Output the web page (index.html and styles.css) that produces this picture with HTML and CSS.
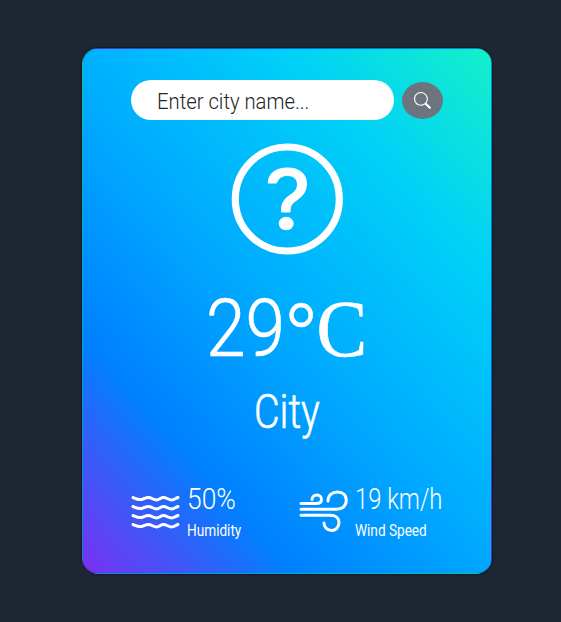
FILE: index.html
```html
<!DOCTYPE html>
<html lang="en">
<head>
<meta charset="utf-8">
<title>Weather</title>
<link rel="stylesheet" href="styles.css">
</head>
<body>
<main class="card">
  <form class="search">
    <label class="field"><span class="fit placeholder">Enter city name...</span></label>
    <button class="go" type="button" aria-label="Search">
      <svg width="17" height="17" viewBox="0 0 16 16" fill="#fff"><path d="M11.742 10.344a6.500 6.500 0 1 0-1.397 1.398l3.850 3.850a1 1 0 0 0 1.415-1.414l-3.850-3.850zM12 6.500a5.500 5.500 0 1 1-11 0 5.500 5.500 0 0 1 11 0"/></svg>
    </button>
  </form>
  <svg class="status" viewBox="0 0 112 112" fill="none" stroke="#fff">
    <circle cx="56.300" cy="56" r="52" stroke-width="7.200"/>
    <path d="M38 40.500H45C47 40.500 46.500 33 56.500 33C62.500 33 66 36 66 41C66 46 64 48 60 51C53 56 50 59.500 50 67.500C50 69 50.500 69.500 51.500 69.500H58C59.200 69.500 59.700 69 59.700 67.500C59.700 62 61.500 60.500 66.500 57C72.500 52.500 76 48 76 40.500C76 30.500 68 24.500 56.500 24.500C45 24.500 37.300 30 36.800 39C36.800 40 37 40.500 38 40.500Z" fill="#fff" stroke="none"/>
    <ellipse cx="55.200" cy="80.500" rx="7.500" ry="6.800" fill="#fff" stroke="none"/>
  </svg>
  <h1 class="temp"><span class="fit digits">29</span><span class="fit unit">°C</span></h1>
  <h2 class="city"><span class="fit">City</span></h2>
  <section class="details">
    <div class="detail">
      <svg class="icon" viewBox="0 0 50 46" fill="none" stroke="#fff" stroke-width="3" stroke-linecap="round">
        <path d="M2 7.500C5.500 9 7.500 10 10.500 9.500C13.500 9 14.500 7.500 17.500 7.500S22.500 10 25.500 10S29.500 7.500 32.500 7.500S37.500 10 40.500 10S44 8.500 47 7.500"/>
        <path d="M2 16.500C5.500 18 7.500 19 10.500 18.500C13.500 18 14.500 16.500 17.500 16.500S22.500 19 25.500 19S29.500 16.500 32.500 16.500S37.500 19 40.500 19S44 17.500 47 16.500"/>
        <path d="M2 25.500C5.500 27 7.500 28 10.500 27.500C13.500 27 14.500 25.500 17.500 25.500S22.500 28 25.500 28S29.500 25.500 32.500 25.500S37.500 28 40.500 28S44 26.500 47 25.500"/>
        <path d="M2 34.500C5.500 36 7.500 37 10.500 36.500C13.500 36 14.500 34.500 17.500 34.500S22.500 37 25.500 37S29.500 34.500 32.500 34.500S37.500 37 40.500 37S44 35.500 47 34.500"/>
      </svg>
      <div class="reading">
        <p class="value"><span class="fit percent">50%</span></p>
        <p class="label"><span class="fit humidity">Humidity</span></p>
      </div>
    </div>
    <div class="detail">
      <svg class="icon" viewBox="0 0 50 46" fill="none" stroke="#fff" stroke-width="3" stroke-linecap="round">
        <path d="M2 13.500H17C20.500 13.500 22.500 12 22.500 9.500C22.500 7 20.500 5 18 5C15 5 13 7 13 9.500"/>
        <path d="M2 19.300H37.500C43.500 19.300 47.300 15.500 47.300 10.500C47.300 5 43.500 2 38.500 2C33 2 29 5.500 29 11"/>
        <path d="M2 25.200H31.500C36.500 25.200 40 28 40 32.500C40 37.500 36.500 40.500 32.500 40.500C28 40.500 25 37 25 33"/>
      </svg>
      <div class="reading">
        <p class="value"><span class="fit speed">19 km/h</span></p>
        <p class="label"><span class="fit windlabel">Wind Speed</span></p>
      </div>
    </div>
  </section>
</main>
</body>
</html>
```
FILE: styles.css
```css
* { box-sizing: border-box; }
body {
  margin: 0;
  padding: 48px 69px 48px 82px;
  background: #1e2634;
  color: #fff;
  font-family: Roboto, "Liberation Sans", sans-serif;
  font-weight: 300;
}
h1, h2, p { margin: 0; font-weight: 300; }
svg { display: block; flex: none; }
.card {
  width: 410px;
  height: 526px;
  padding: 31px 48px 0 48px;
  border: 1px solid rgba(0, 0, 0, .175);
  border-radius: 16px;
  background: linear-gradient(48deg, #7c2ff0 0%, #0080ff 24%, #00a8ff 47%, #00d0f8 76%, #14f0c8 100%);
  box-shadow: 0 0 1px 1px #141b26;
}
.fit {
  display: inline-block;
  white-space: nowrap;
  transform-origin: left center;
}
.search { display: flex; align-items: center; gap: 8px; }
.field {
  width: 263px;
  height: 40px;
  padding-left: 26px;
  border-radius: 20px;
  background: #fff;
  color: #212529;
  font-size: 22.5px;
  line-height: 43px;
}
.placeholder { transform: scaleX(.9); }
.go {
  display: flex;
  align-items: center;
  justify-content: center;
  width: 41px;
  height: 37px;
  padding: 0;
  border: 0;
  border-radius: 50%;
  background: #6c757d;
}
.status { width: 112px; height: 112px; margin: 23px 0 0 100px; }
.temp {
  display: flex;
  height: 90px;
  margin: 29px 0 0 75px;
  font-size: 80px;
  line-height: 90px;
}
.digits {
  width: 80px;
  transform: scaleX(.89);
  -webkit-text-stroke: .7px #fff;
}
.unit {
  font-family: "Liberation Serif", serif;
  font-weight: 400;
  transform: scaleX(.95);
  -webkit-text-stroke: .6px #fff;
}
.city {
  height: 60px;
  margin: 8px 0 0 123px;
  font-size: 48px;
  line-height: 60px;
}
.city .fit { transform: scaleX(.82); -webkit-text-stroke: .6px #fff; }
.details { display: flex; margin-top: 38px; }
.detail { display: flex; flex: none; width: 168px; gap: 6px; }
.icon { width: 50px; height: 46px; margin-top: 10px; }
.value { height: 38px; font-size: 29px; line-height: 38px; }
.label { height: 26px; font-size: 16px; line-height: 26px; font-weight: 400; }
.percent { transform: scaleX(.91); }
.speed { transform: scaleX(.82); }
.humidity { transform: scaleX(.85); }
.windlabel { transform: scaleX(.85); }
```
